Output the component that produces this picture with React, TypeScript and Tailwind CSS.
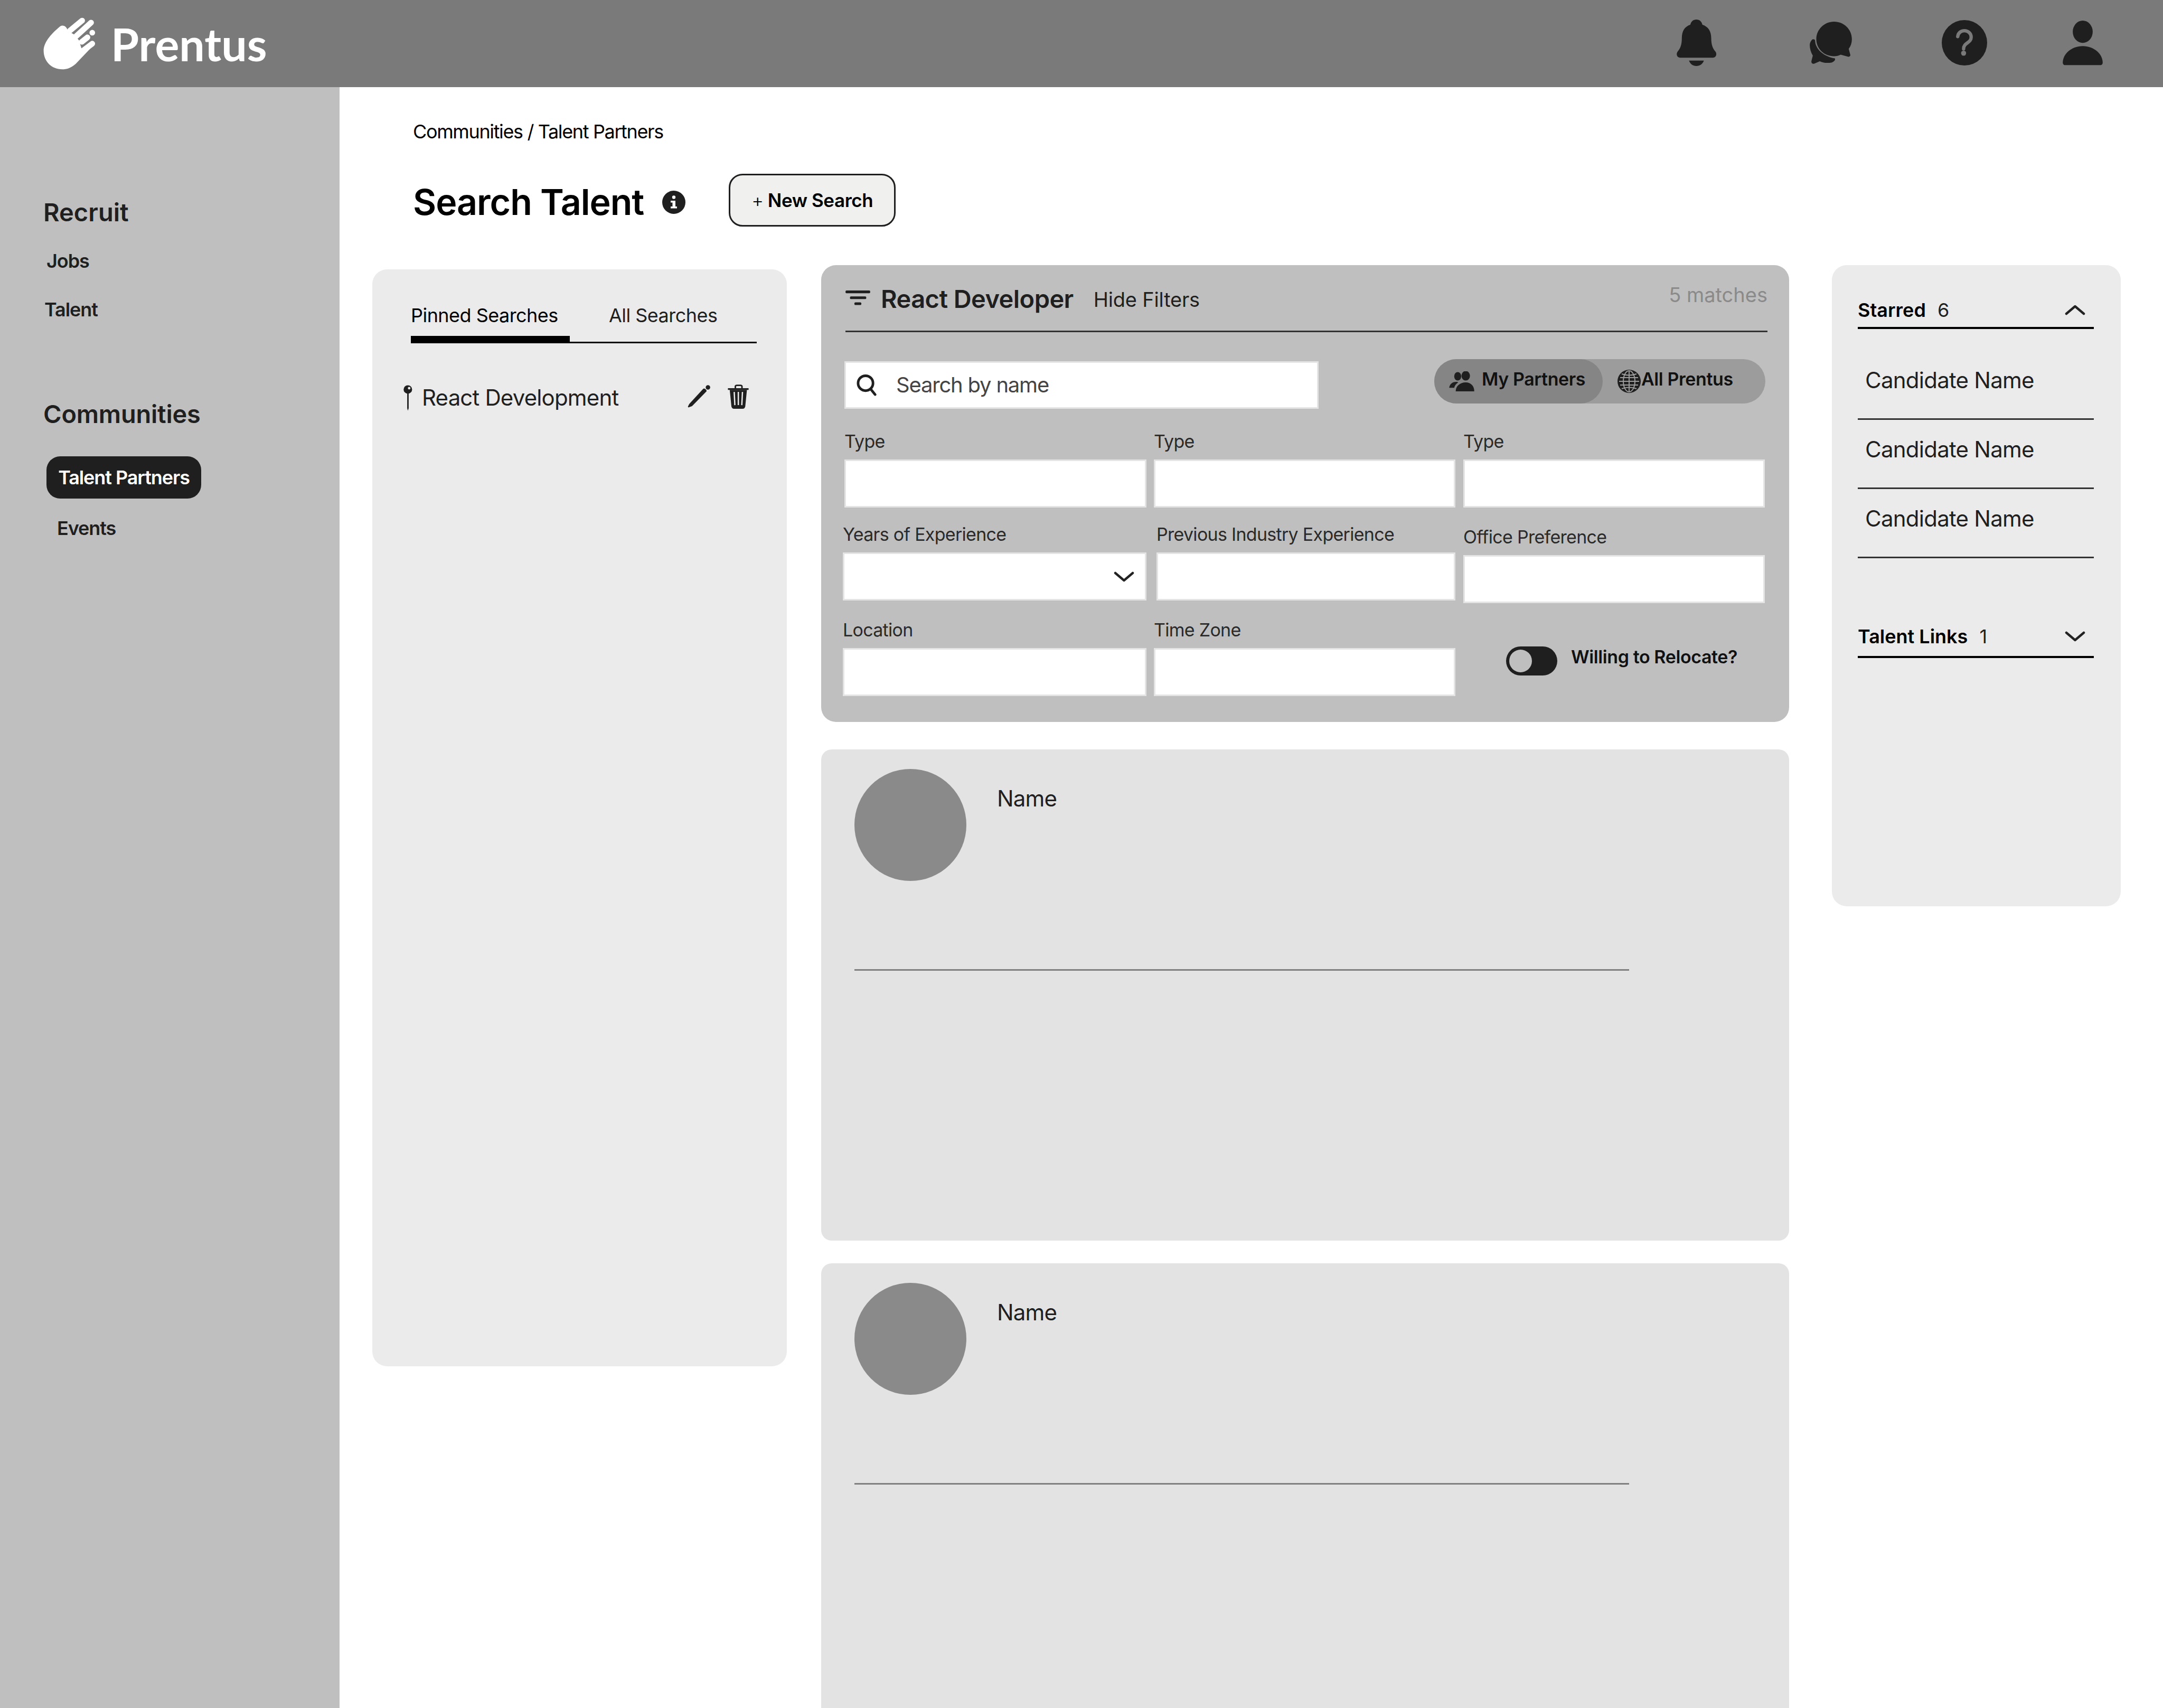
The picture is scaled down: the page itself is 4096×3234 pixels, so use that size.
import React from 'react';

const candidates = ['Candidate Name', 'Candidate Name', 'Candidate Name'];

const HandLogo = () => (
  <svg viewBox="50 45 315 315" className="w-[99px] h-[99px]">
    <path
      fill="#fff"
      d="M52 245C52 200 90 150 150 100C165 88 190 95 197 125L235 148L265 183L280 232L355 210L245 325C215 350 190 358 165 358C100 358 52 310 52 245Z"
    />
    <g stroke="#fff" strokeLinecap="round" strokeWidth="34" fill="none">
      <path d="M210 125L284 64" />
      <path d="M248 158L338 76" />
      <path d="M282 192L316 165" />
      <path d="M290 245L345 203" />
    </g>
    <circle cx="345" cy="137" r="17" fill="#fff" />
  </svg>
);

const BellIcon = () => (
  <svg viewBox="57 57 237 278" className="w-[75px] h-[88px]" fill="#1f1f1f">
    <path d="M175 57C155 57 143 70 139 88C105 100 88 125 88 170C88 205 80 230 62 250C52 265 60 285 78 285H274C292 285 300 265 290 250C272 230 264 205 264 170C264 125 245 100 211 88C207 70 195 57 175 57Z" />
    <path d="M131 303H220C212 325 195 335 175 335C155 335 139 325 131 303Z" />
  </svg>
);

const ChatIcon = () => (
  <svg viewBox="855 65 252 253" className="w-[80px] h-[80px]" fill="#1f1f1f">
    <path d="M1000 65C1060 65 1107 112 1107 170C1107 192 1100 212 1088 228L1098 265C1098 273 1090 277 1080 274L1040 263C1028 269 1015 272 1000 272C942 272 894 228 894 170C894 112 942 65 1000 65Z" />
    <path d="M875 170C890 170 885 180 890 200C905 245 950 275 1005 285C1010 295 1000 305 985 310C955 315 930 310 915 302L880 317C868 318 863 312 865 300L873 268C855 240 850 200 860 185C865 175 870 170 875 170Z" />
  </svg>
);

const HelpIcon = () => (
  <svg viewBox="57 57 270 270" className="w-[86px] h-[86px]">
    <circle cx="192" cy="192" r="135" fill="#1f1f1f" />
    <path
      d="M152 155C155 130 175 120 192 120C215 120 232 138 232 158C232 195 187 190 187 228"
      stroke="#7a7a7a"
      strokeWidth="20"
      strokeLinecap="round"
      fill="none"
    />
    <circle cx="187" cy="254" r="15" fill="#7a7a7a" />
  </svg>
);

const UserIcon = () => (
  <svg viewBox="778 57 244 270" className="w-[78px] h-[85px]" fill="#1f1f1f">
    <ellipse cx="900" cy="124" rx="60" ry="67" />
    <path d="M780 310C780 255 835 210 900 210C965 210 1020 255 1020 310C1020 320 1012 325 1005 325H795C787 325 780 320 780 310Z" />
  </svg>
);

const InfoIcon = () => (
  <svg viewBox="0 0 44 44" className="w-[44px] h-[44px]">
    <circle cx="22" cy="22" r="22" fill="#1f1f1f" />
    <circle cx="22" cy="12.5" r="3.2" fill="#fff" />
    <path d="M16 19H25V30H28V33.5H16V30H19.5V22.5H16Z" fill="#fff" />
  </svg>
);

const PinIcon = () => (
  <svg viewBox="50 74 55 156" className="w-[17px] h-[49px]">
    <circle cx="77" cy="100" r="26" fill="#1f1f1f" />
    <circle cx="85" cy="92" r="8" fill="#ebebeb" />
    <path d="M73 115H82V215L77 230L73 215Z" fill="#1f1f1f" />
  </svg>
);

const PencilIcon = () => (
  <svg viewBox="45 38 137 136" className="w-[43px] h-[43px]" fill="#1f1f1f">
    <path d="M47 168L55 152L140 60C148 55 160 65 160 75L72 165L50 173Z" />
    <circle cx="168" cy="52" r="13.5" />
  </svg>
);

const TrashIcon = () => (
  <svg viewBox="283 40 125 147" className="w-[40px] h-[46px]">
    <path d="M283 62H408V73H283Z" fill="#1f1f1f" />
    <path d="M328 62V52Q328 45 338 45H358Q368 45 368 52V62" fill="none" stroke="#1f1f1f" strokeWidth="9" />
    <path d="M294 73H398L388 172Q386 187 372 187H320Q306 187 304 172Z" fill="#1f1f1f" />
    <path d="M321 85L325 165M346 85V165M371 85L367 165" stroke="#ebebeb" strokeWidth="8" />
  </svg>
);

const FilterIcon = () => (
  <svg viewBox="0 0 50 30" className="w-[47px] h-[28px]" fill="#1f1f1f">
    <rect x="0" y="0" width="50" height="5.5" rx="2" />
    <rect x="9" y="12" width="33" height="5.5" rx="2" />
    <rect x="18" y="24" width="14" height="5.5" rx="2" />
  </svg>
);

const SearchIcon = () => (
  <svg viewBox="0 0 40 42" className="w-[39px] h-[42px]" fill="none" stroke="#1f1f1f" strokeWidth="5" strokeLinecap="round">
    <circle cx="17.5" cy="17.5" r="14.5" />
    <path d="M27.5 29L36 39.5" />
  </svg>
);

const PeopleIcon = () => (
  <svg viewBox="0 0 50 40" className="w-[48px] h-[38px]" fill="#1f1f1f">
    <ellipse cx="17" cy="10" rx="7" ry="8.5" />
    <ellipse cx="33" cy="9" rx="8.5" ry="9.5" />
    <path d="M0 33C1 26 6 21 14 21C16 21 17 21.5 18 22C14 25 11 28 10 33Z" />
    <path d="M13 40C13 29 22 22 33 22C43 22 50 29 50 40Z" />
  </svg>
);

const GlobeIcon = () => (
  <svg viewBox="0 0 44 44" className="w-[44px] h-[44px]">
    <circle cx="22" cy="22" r="22" fill="#1f1f1f" />
    <g fill="none" stroke="#9c9c9c" strokeWidth="2">
      <ellipse cx="22" cy="22" rx="11" ry="20" />
      <path d="M22 3V41M5 15H39M3 22H41M5 29H39" />
      <path d="M8 8Q22 13 36 8M8 36Q22 31 36 36" />
    </g>
  </svg>
);

const Chevron = ({ up = false }: { up?: boolean }) => (
  <svg viewBox="0 0 39 20" className="w-[39px] h-[20px]" fill="none" stroke="#222" strokeWidth="4.5" strokeLinecap="round" strokeLinejoin="round">
    <path d={up ? 'M3 17L19.5 3L36 17' : 'M3 3L19.5 17L36 3'} />
  </svg>
);

const Field = ({ label, className, children }: { label: string; className: string; children?: React.ReactNode }) => (
  <div className={className}>
    <div className="h-[44px] mb-[12px] text-[34px] leading-[44px] tracking-[-0.021em] text-[#2a2a2a]">{label}</div>
    <div className="h-[91px] bg-white border-[3px] border-[#e4e4e4] flex items-center justify-end pr-[20px]">{children}</div>
  </div>
);

const ResultCard = () => (
  <div className="h-[930px] shrink-0 bg-[#e3e3e3] rounded-[20px] pt-[37px] pl-[63px]">
    <div className="flex items-start">
      <div className="w-[212px] h-[212px] rounded-full bg-[#8a8a8a]" />
      <div className="ml-[58px] mt-[28px] text-[42px] leading-[56px] tracking-[-0.02em] text-[#1f1f1f]">Name</div>
    </div>
    <div className="w-[1467px] mt-[167px] border-t-[3px] border-[#808080]" />
  </div>
);

export default function App() {
  return (
    <div className="w-[4096px] h-[3234px] overflow-hidden flex flex-col bg-white font-['Inter',sans-serif] text-black">
      <header className="h-[165px] shrink-0 bg-[#7a7a7a] flex items-center pl-[82px] pr-[113px]">
        <HandLogo />
        <span className="ml-[29px] text-[86px] leading-[100px] font-bold text-white font-['Lato',sans-serif]">Prentus</span>
        <div className="ml-auto mb-[3px] flex items-center">
          <BellIcon />
          <div className="ml-[177px]"><ChatIcon /></div>
          <div className="ml-[170px]"><HelpIcon /></div>
          <div className="ml-[142px]"><UserIcon /></div>
        </div>
      </header>

      <div className="flex flex-1 min-h-0">
        <aside className="w-[643px] shrink-0 bg-[#bfbfbf] pl-[82px] pt-[208px]">
          <div className="text-[47px] leading-[58px] font-semibold text-[#1f1f1f]">Recruit</div>
          <div className="mt-[41px] ml-[6px] text-[36px] leading-[44px] tracking-[-0.03em] font-semibold text-[#1f1f1f]">Jobs</div>
          <div className="mt-[48px] ml-[2px] text-[36px] leading-[44px] tracking-[-0.03em] font-semibold text-[#1f1f1f]">Talent</div>
          <div className="mt-[147px] text-[47px] leading-[58px] tracking-[-0.005em] font-semibold text-[#1f1f1f]">Communities</div>
          <div className="mt-[51px] ml-[6px] w-[293px] h-[80px] rounded-[26px] bg-[#1f1f1f] flex items-center justify-center text-[36px] tracking-[-0.03em] font-semibold text-white">
            Talent Partners
          </div>
          <div className="mt-[34px] ml-[26px] text-[36px] leading-[44px] tracking-[-0.03em] font-semibold text-[#1f1f1f]">Events</div>
        </aside>

        <main className="flex-1 pl-[62px]">
          <div className="ml-[77px] mt-[60px] h-[48px] text-[36px] leading-[48px] tracking-[-0.038em]">Communities / Talent Partners</div>

          <div className="ml-[77px] mt-[56px] h-[100px] flex items-center">
            <h1 className="mt-[6px] text-[68px] leading-[90px] tracking-[-0.015em] font-semibold">Search Talent</h1>
            <div className="ml-[35px] mt-[8px]"><InfoIcon /></div>
            <div className="ml-[82px] w-[316px] h-[100px] rounded-[26px] border-[3px] border-[#1f1f1f] bg-[#f0f0ee] flex items-center justify-center text-[35px] tracking-[-0.012em]">
              <span className="font-light mr-[8px]">+</span>
              <span className="font-semibold">New Search</span>
            </div>
          </div>

          <div className="mt-[73px] flex items-start">
            <section className="w-[785px] h-[2077px] mt-[8px] shrink-0 bg-[#ebebeb] rounded-[28px] pl-[73px] pr-[57px] pt-[65px]">
              <div className="flex border-b-[3px] border-black h-[75px] text-[36px] leading-[44px] tracking-[-0.015em]">
                <div className="w-[301px] h-[75px] border-b-[14px] border-black">Pinned Searches</div>
                <div className="ml-[74px] text-[#1f1f1f]">All Searches</div>
              </div>
              <div className="mt-[73px] -ml-[14px] pr-[15px] h-[60px] flex items-center">
                <PinIcon />
                <span className="ml-[18px] text-[42px] leading-[56px] tracking-[-0.02em] text-[#1f1f1f]">React Development</span>
                <div className="ml-auto mb-[5px]"><PencilIcon /></div>
                <div className="ml-[33px] mb-[5px]"><TrashIcon /></div>
              </div>
            </section>

            <div className="ml-[65px] w-[1833px] shrink-0 flex flex-col">
              <section className="h-[865px] shrink-0 bg-[#bfbfbf] rounded-[28px] pl-[41px] pr-[45px]">
                <div className="h-[127px] ml-[5px] -mr-[4px] border-b-[3px] border-[#333] flex items-center">
                  <FilterIcon />
                  <span className="ml-[20px] mt-[3px] text-[47px] leading-[58px] tracking-[-0.012em] font-semibold text-[#1f1f1f]">React Developer</span>
                  <span className="ml-[38px] mt-[5px] text-[38px] leading-[48px] tracking-[-0.005em] text-[#1f1f1f]">Hide Filters</span>
                  <span className="ml-auto mb-[12px] text-[38px] leading-[48px] text-[#8a8a8a]">5 matches</span>
                </div>

                <div className="mt-[55px] flex justify-between items-start">
                  <div className="ml-[3px] w-[898px] h-[90px] bg-white border-[3px] border-[#e4e4e4] flex items-center pl-[20px]">
                    <SearchIcon />
                    <span className="ml-[36px] text-[40px] leading-[52px] tracking-[-0.03em] text-[#444]">Search by name</span>
                  </div>
                  <div className="-mt-[4px] w-[627px] h-[84px] rounded-full bg-[#9c9c9c] flex items-center">
                    <div className="w-[319px] h-[84px] rounded-full bg-[#858585] flex items-center pl-[28px]">
                      <PeopleIcon />
                      <span className="ml-[14px] mb-[8px] text-[34px] leading-[44px] tracking-[-0.012em] font-semibold text-[#111]">My Partners</span>
                    </div>
                    <div className="ml-[28px]"><GlobeIcon /></div>
                    <span className="ml-[1px] mb-[8px] text-[34px] leading-[44px] tracking-[-0.012em] font-semibold text-[#111]">All Prentus</span>
                  </div>
                </div>

                <div className="mt-[40px] grid grid-cols-[589px_586px_572px]">
                  <Field label="Type" className="ml-[3px] w-[572px]" />
                  <Field label="Type" className="w-[571px]" />
                  <Field label="Type" className="w-[571px]" />
                </div>

                <div className="mt-[29px] grid grid-cols-[594px_581px_572px] items-start">
                  <Field label="Years of Experience" className="w-[575px]">
                    <Chevron />
                  </Field>
                  <Field label="Previous Industry Experience" className="w-[566px]" />
                  <Field label="Office Preference" className="mt-[5px] w-[571px]" />
                </div>

                <div className="mt-[29px] grid grid-cols-[589px_586px_572px] items-start">
                  <Field label="Location" className="w-[575px]" />
                  <Field label="Time Zone" className="w-[571px]" />
                  <div className="pl-[81px] pt-[53px] flex items-start">
                    <div className="w-[97px] h-[55px] rounded-full bg-[#1f1f1f] pl-[6px] flex items-center">
                      <div className="w-[43px] h-[43px] rounded-full bg-[#bfbfbf]" />
                    </div>
                    <span className="ml-[26px] -mt-[2px] whitespace-nowrap text-[34px] leading-[44px] tracking-[-0.012em] font-semibold text-[#111]">Willing to Relocate?</span>
                  </div>
                </div>
              </section>

              <div className="mt-[52px]"><ResultCard /></div>
              <div className="mt-[43px]"><ResultCard /></div>
            </div>

            <section className="ml-[81px] w-[547px] h-[1214px] shrink-0 bg-[#ebebeb] rounded-[28px] pl-[49px] pr-[51px] pt-[61px]">
              <div className="h-[60px] flex items-center border-b-[4px] border-black pb-[8px]">
                <span className="text-[36px] leading-[44px] font-semibold">Starred</span>
                <span className="ml-[22px] text-[36px] leading-[44px] text-[#1f1f1f]">6</span>
                <div className="ml-auto mr-[16px]"><Chevron up /></div>
              </div>
              <div className="pt-[41px]">
                {candidates.map((name, index) => (
                  <div key={index} className="h-[131px] border-b-[3px] border-[#333] pl-[14px] pt-[28px] text-[42px] leading-[56px] tracking-[-0.018em] text-[#1f1f1f]">
                    {name}
                  </div>
                ))}
              </div>
              <div className="mt-[118px] h-[71px] flex items-center border-b-[4px] border-black pb-[8px]">
                <span className="text-[36px] leading-[44px] font-semibold">Talent Links</span>
                <span className="ml-[22px] text-[36px] leading-[44px] text-[#1f1f1f]">1</span>
                <div className="ml-auto mr-[16px]"><Chevron /></div>
              </div>
            </section>
          </div>
        </main>
      </div>
    </div>
  );
}
